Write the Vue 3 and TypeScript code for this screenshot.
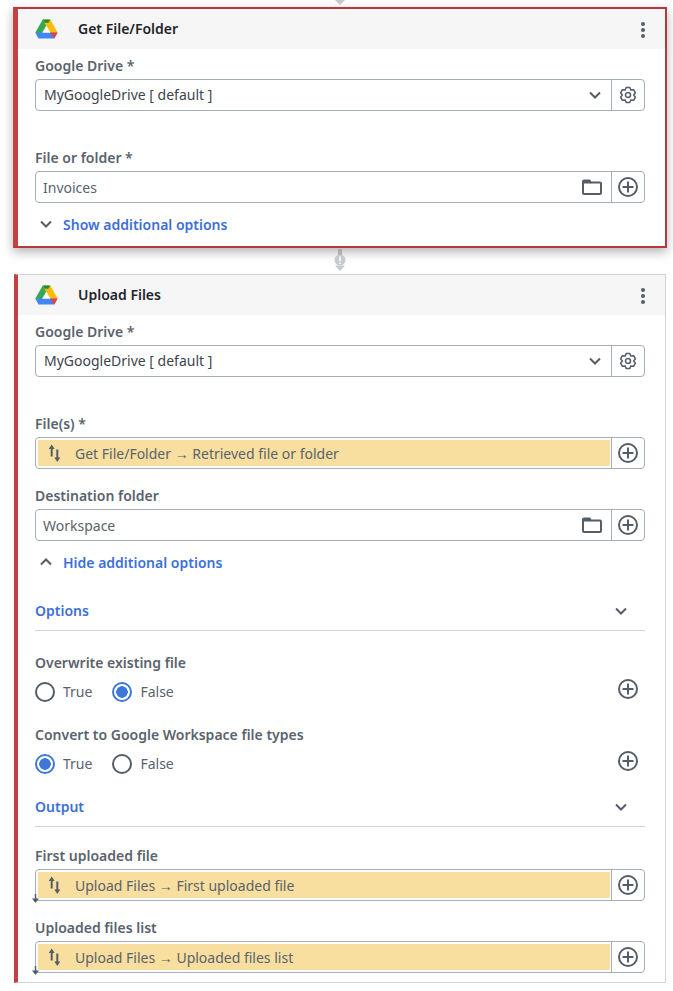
<script setup lang="ts">
// six-tooth cog outline, same look as the settings icon in the reference
function buildGear(): string {
  const points: string[] = [];
  for (let i = 0; i < 6; i++) {
    const a = (Math.PI / 3) * i - Math.PI / 2;
    const corners: [number, number][] = [
      [a - 0.52, 6.3],
      [a - 0.24, 8.6],
      [a + 0.24, 8.6],
      [a + 0.52, 6.3],
    ];
    for (const [t, r] of corners) {
      points.push(`${(10 + r * Math.cos(t)).toFixed(2)} ${(10 + r * Math.sin(t)).toFixed(2)}`);
    }
  }
  return "M" + points.join("L") + "z";
}

const gearPath = buildGear();
</script>

<template>
  <div class="page">
    <div class="tip">
      <svg class="tip-arrow" viewBox="0 0 10 5"><path d="M0 0h10L5 5z" /></svg>
    </div>

    <section class="card selected">
      <header class="card-head">
        <svg class="drive" viewBox="0 0 24 21">
          <path d="M8 0.500L0.400 14.300l3.400 6.200L12 6.500z" fill="#34a853" />
          <path d="M8 0.500h8l7.600 13.800h-8z" fill="#fbbc04" />
          <path d="M8 0.500h8L14 4H10z" fill="#1e8e3e" />
          <path d="M0.400 14.300H8l3 0h12.600l-3.400 6.200H3.800z" fill="#4285f4" />
          <path d="M15.600 14.300h8l-3.400 6.200z" fill="#ea4335" />
          <path d="M8 14.300h8l-4-7z" fill="#fff" />
        </svg>
        <h2>Get File/Folder</h2>
        <span class="kebab"><i></i><i></i><i></i></span>
      </header>
      <div class="card-body">
        <label>Google Drive *</label>
        <div class="field">
          <div class="control">
            <span class="value dark">MyGoogleDrive [ default ]</span>
            <svg class="chev" viewBox="0 0 12 8"><path d="M1 1.500l5 5 5-5" /></svg>
          </div>
          <button class="side"><svg class="gear" viewBox="0 0 20 20"><path :d="gearPath" /><circle cx="10" cy="10" r="2.800" /></svg></button>
        </div>

        <label class="far">File or folder *</label>
        <div class="field">
          <div class="control">
            <span class="value">Invoices</span>
            <svg class="folder" viewBox="0 0 20 16"><path d="M1 3V14a1 1 0 0 0 1 1H18a1 1 0 0 0 1-1V4.500a1 1 0 0 0-1-1H9L7.500 1.500H2A1 1 0 0 0 1 2.500z" /><path class="fill" d="M1 1.500H7.500L9 3.500V4.500H1z" /></svg>
          </div>
          <button class="side"><svg class="plus" viewBox="0 0 22 22"><circle cx="11" cy="11" r="9" /><path d="M11 5.500v11M5.500 11h11" /></svg></button>
        </div>

        <div class="toggle">
          <svg class="chev" viewBox="0 0 12 8"><path d="M1 1.500l5 5 5-5" /></svg>
          <a>Show additional options</a>
        </div>
      </div>
    </section>

    <div class="connector">
      <svg class="link" viewBox="0 0 12 23">
        <rect class="stem" x="4" y="0" width="4" height="6" />
        <circle cx="6" cy="11" r="5.500" />
        <path class="mark" d="M6 7.500v4.500M6 13.500v1.500" />
        <path d="M1 16.500h10L6 22z" />
      </svg>
    </div>

    <section class="card">
      <header class="card-head">
        <svg class="drive" viewBox="0 0 24 21">
          <path d="M8 0.500L0.400 14.300l3.400 6.200L12 6.500z" fill="#34a853" />
          <path d="M8 0.500h8l7.600 13.800h-8z" fill="#fbbc04" />
          <path d="M8 0.500h8L14 4H10z" fill="#1e8e3e" />
          <path d="M0.400 14.300H8l3 0h12.600l-3.400 6.200H3.800z" fill="#4285f4" />
          <path d="M15.600 14.300h8l-3.400 6.200z" fill="#ea4335" />
          <path d="M8 14.300h8l-4-7z" fill="#fff" />
        </svg>
        <h2>Upload Files</h2>
        <span class="kebab"><i></i><i></i><i></i></span>
      </header>
      <div class="card-body">
        <label>Google Drive *</label>
        <div class="field">
          <div class="control">
            <span class="value dark">MyGoogleDrive [ default ]</span>
            <svg class="chev" viewBox="0 0 12 8"><path d="M1 1.500l5 5 5-5" /></svg>
          </div>
          <button class="side"><svg class="gear" viewBox="0 0 20 20"><path :d="gearPath" /><circle cx="10" cy="10" r="2.800" /></svg></button>
        </div>

        <label class="far">File(s) *</label>
        <div class="field">
          <div class="control mapped">
            <div class="chip">
              <svg class="swap" viewBox="0 0 16 18"><path d="M4.700 4v8.500M10.300 5.500v8.500" /><path class="fill" d="M4.700 0.500L1.700 5h6zM10.300 18l3-4.500h-6z" /></svg>
              <span>Get File/Folder → Retrieved file or folder</span>
            </div>
          </div>
          <button class="side"><svg class="plus" viewBox="0 0 22 22"><circle cx="11" cy="11" r="9" /><path d="M11 5.500v11M5.500 11h11" /></svg></button>
        </div>

        <label class="near">Destination folder</label>
        <div class="field">
          <div class="control">
            <span class="value">Workspace</span>
            <svg class="folder" viewBox="0 0 20 16"><path d="M1 3V14a1 1 0 0 0 1 1H18a1 1 0 0 0 1-1V4.500a1 1 0 0 0-1-1H9L7.500 1.500H2A1 1 0 0 0 1 2.500z" /><path class="fill" d="M1 1.500H7.500L9 3.500V4.500H1z" /></svg>
          </div>
          <button class="side"><svg class="plus" viewBox="0 0 22 22"><circle cx="11" cy="11" r="9" /><path d="M11 5.500v11M5.500 11h11" /></svg></button>
        </div>

        <div class="toggle">
          <svg class="chev" viewBox="0 0 12 8"><path d="M1 6.500l5-5 5 5" /></svg>
          <a>Hide additional options</a>
        </div>

        <div class="section-head options-head">
          <span>Options</span>
          <svg class="chev" viewBox="0 0 12 8"><path d="M1 1.500l5 5 5-5" /></svg>
        </div>

        <label class="after-section">Overwrite existing file</label>
        <div class="radio-row">
          <span class="radio"></span><span class="radio-text">True</span>
          <span class="radio on"></span><span class="radio-text">False</span>
          <svg class="plus" viewBox="0 0 22 22"><circle cx="11" cy="11" r="9" /><path d="M11 5.500v11M5.500 11h11" /></svg>
        </div>

        <label class="after-radio">Convert to Google Workspace file types</label>
        <div class="radio-row">
          <span class="radio on"></span><span class="radio-text">True</span>
          <span class="radio"></span><span class="radio-text">False</span>
          <svg class="plus" viewBox="0 0 22 22"><circle cx="11" cy="11" r="9" /><path d="M11 5.500v11M5.500 11h11" /></svg>
        </div>

        <div class="section-head output-head">
          <span>Output</span>
          <svg class="chev" viewBox="0 0 12 8"><path d="M1 1.500l5 5 5-5" /></svg>
        </div>

        <label class="after-output">First uploaded file</label>
        <div class="field">
          <div class="control mapped">
            <div class="chip">
              <svg class="swap" viewBox="0 0 16 18"><path d="M4.700 4v8.500M10.300 5.500v8.500" /><path class="fill" d="M4.700 0.500L1.700 5h6zM10.300 18l3-4.500h-6z" /></svg>
              <span>Upload Files → First uploaded file</span>
            </div>
            <svg class="out-arrow" viewBox="0 0 7 9"><path d="M3.500 0v5" /><path class="fill" d="M0 4.500h7L3.500 9z" /></svg>
          </div>
          <button class="side"><svg class="plus" viewBox="0 0 22 22"><circle cx="11" cy="11" r="9" /><path d="M11 5.500v11M5.500 11h11" /></svg></button>
        </div>

        <label class="near">Uploaded files list</label>
        <div class="field">
          <div class="control mapped">
            <div class="chip">
              <svg class="swap" viewBox="0 0 16 18"><path d="M4.700 4v8.500M10.300 5.500v8.500" /><path class="fill" d="M4.700 0.500L1.700 5h6zM10.300 18l3-4.500h-6z" /></svg>
              <span>Upload Files → Uploaded files list</span>
            </div>
            <svg class="out-arrow" viewBox="0 0 7 9"><path d="M3.500 0v5" /><path class="fill" d="M0 4.500h7L3.500 9z" /></svg>
          </div>
          <button class="side"><svg class="plus" viewBox="0 0 22 22"><circle cx="11" cy="11" r="9" /><path d="M11 5.500v11M5.500 11h11" /></svg></button>
        </div>
      </div>
    </section>
  </div>
</template>

<style>
html,
body {
  margin: 0;
  background: #fff;
}
</style>

<style scoped>
.page {
  width: 673px;
  height: 991px;
  overflow: hidden;
  padding: 0 7px 0 14px;
  box-sizing: border-box;
  font-family: "Noto Sans", sans-serif;
  font-size: 14px;
  color: #5a636d;
}

.tip {
  height: 8px;
  display: flex;
  justify-content: center;
}

.tip-arrow {
  width: 10px;
  height: 5px;
  fill: #c3c9ce;
}

.card {
  background: #fff;
  border: 1px solid #cfd4d9;
  border-left: 4px solid #c44141;
  box-sizing: border-box;
  height: 709px;
}

.card.selected {
  height: 241px;
  margin: -1px -1px 0 -1px;
  border: 2px solid #b5393b;
  border-left: 5px solid #c44141;
  box-shadow: 0 4px 10px rgba(0, 0, 0, 0.3);
}

.card-head {
  height: 40px;
  background: #f6f6f6;
  display: flex;
  align-items: center;
  padding: 0 20px 0 17px;
}

.drive {
  width: 23px;
  height: 20px;
}

.card-head h2 {
  margin: -2px 0 0 20px;
  font-size: 14px;
  font-weight: 600;
  color: #1f252b;
  flex: 1;
}

.kebab {
  display: flex;
  flex-direction: column;
  gap: 2px;
  margin-top: 2px;
}

.kebab i {
  width: 4px;
  height: 4px;
  border-radius: 50%;
  background: #555e68;
}

.card-body {
  padding: 6px 20px 0 17px;
}

label {
  display: block;
  height: 22px;
  line-height: 22px;
  margin-bottom: 2px;
  font-weight: 600;
  font-size: 14px;
}

label.far {
  margin-top: 36px;
}

label.near {
  margin-top: 16px;
}

.field {
  display: flex;
  height: 32px;
  box-sizing: border-box;
  border: 1px solid #a5aeb7;
  border-radius: 4px;
}

.control {
  flex: 1;
  display: flex;
  align-items: center;
  justify-content: space-between;
  padding: 0 10px 0 7px;
  position: relative;
  min-width: 0;
}

.control.mapped {
  padding: 2px 0 2px 2px;
  align-items: stretch;
}

.value {
  line-height: 22px;
  margin-top: 2px;
}

.value.dark {
  color: #3c444d;
  margin: 0 0 0 1px;
}

.side {
  width: 33px;
  flex: none;
  padding: 0;
  border: 0;
  border-left: 1px solid #a5aeb7;
  background: none;
  display: flex;
  align-items: center;
  justify-content: center;
}

.chev {
  width: 12px;
  height: 8px;
  fill: none;
  stroke: #555e68;
  stroke-width: 2;
}

.gear {
  width: 18px;
  height: 18px;
  fill: none;
  stroke: #555e68;
  stroke-width: 1.700;
  stroke-linejoin: round;
}

.plus {
  width: 22px;
  height: 22px;
  fill: none;
  stroke: #555e68;
  stroke-width: 2;
}

.folder {
  width: 20px;
  height: 16px;
  fill: none;
  stroke: #555e68;
  stroke-width: 2;
  margin-right: -1px;
}

.folder .fill {
  fill: #555e68;
  stroke: none;
}

.chip {
  flex: 1;
  background: #f9df9f;
  display: flex;
  align-items: center;
  padding-left: 9px;
  gap: 12px;
  margin-right: 1px;
}

.swap {
  width: 16px;
  height: 18px;
  fill: none;
  stroke: #555e68;
  stroke-width: 2;
  margin-top: -1px;
}

.swap .fill,
.out-arrow .fill {
  fill: #555e68;
  stroke: none;
}

.out-arrow {
  position: absolute;
  left: -4px;
  bottom: -3px;
  width: 7px;
  height: 9px;
  stroke: #555e68;
  stroke-width: 1.500;
}

.toggle {
  height: 22px;
  margin-top: 10px;
  display: flex;
  align-items: center;
  gap: 11px;
  padding-left: 5px;
  color: #3d6fd8;
  font-weight: 600;
}

.section-head {
  display: flex;
  align-items: center;
  justify-content: space-between;
  height: 31px;
  padding: 0 18px 4px 0;
  border-bottom: 1px solid #d3d7db;
  color: #3d6fd8;
  font-weight: 600;
}

.options-head {
  margin-top: 22px;
}

.output-head {
  margin-top: 14px;
}

label.after-section {
  margin-top: 21px;
  margin-bottom: 5px;
}

label.after-radio {
  margin-top: 19px;
  margin-bottom: 5px;
}

label.after-output {
  margin-top: 18px;
}

.radio-row {
  display: flex;
  align-items: center;
  height: 26px;
  padding-right: 6px;
}

.radio {
  width: 20px;
  height: 20px;
  box-sizing: border-box;
  border: 2px solid #555e68;
  border-radius: 50%;
  margin-right: 8px;
}

.radio.on {
  border-color: #3d78d8;
  background: radial-gradient(circle, #3d78d8 0 5.500px, #fff 6px);
}

.radio-text {
  margin-right: 20px;
  line-height: 22px;
}

.radio-row .plus {
  margin-left: auto;
  margin-top: -6px;
}

.connector {
  height: 26px;
  display: flex;
  justify-content: center;
  align-items: flex-start;
  padding-top: 1px;
  box-sizing: border-box;
}

.link {
  width: 12px;
  height: 23px;
  fill: #c6cbd0;
}

.link .stem {
  fill: #a9b1b8;
}

.link .mark {
  fill: none;
  stroke: #fff;
  stroke-width: 1.500;
}
</style>
